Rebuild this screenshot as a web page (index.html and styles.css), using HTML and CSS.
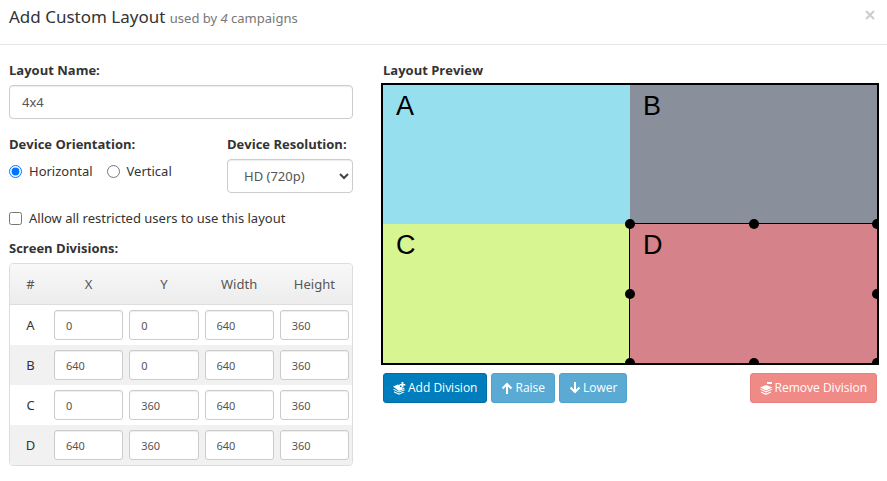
FILE: index.html
```
<!DOCTYPE html>
<html lang="en">
<head>
<meta charset="utf-8">
<title>Add Custom Layout</title>
<link rel="stylesheet" href="styles.css">
</head>
<body>
<header class="modal-header">
  <h1 class="title">Add Custom Layout <small>used by <em>4</em> campaigns</small></h1>
  <button class="close" type="button" aria-label="Close"><svg width="10" height="10" viewBox="0 0 10 10"><path d="M1 1l8 8M9 1l-8 8"/></svg></button>
</header>
<main class="modal-body">
  <form class="settings">
    <label class="heading" for="name">Layout Name:</label>
    <input class="field name" id="name" type="text" value="4x4">
    <div class="device">
      <fieldset class="orientation">
        <legend class="heading">Device Orientation:</legend>
        <div class="radios">
          <label class="choice"><input type="radio" name="orientation" checked>Horizontal</label>
          <label class="choice"><input type="radio" name="orientation">Vertical</label>
        </div>
      </fieldset>
      <div class="resolution">
        <label class="heading" for="resolution">Device Resolution:</label>
        <div class="select-wrap">
          <select class="field" id="resolution"><option>HD (720p)</option></select>
          <svg class="chevron" width="10" height="7" viewBox="0 0 10 7"><path d="M1 1l4 4 4-4"/></svg>
        </div>
      </div>
    </div>
    <label class="choice allow"><input type="checkbox">Allow all restricted users to use this layout</label>
    <h2 class="heading">Screen Divisions:</h2>
    <div class="table-frame">
      <table class="divisions">
        <thead><tr><th class="num">#</th><th>X</th><th>Y</th><th>Width</th><th>Height</th></tr></thead>
        <tbody>
          <tr><td>A</td><td><input aria-label="A X" value="0"></td><td><input aria-label="A Y" value="0"></td><td><input aria-label="A width" value="640"></td><td><input aria-label="A height" value="360"></td></tr>
          <tr><td>B</td><td><input aria-label="B X" value="640"></td><td><input aria-label="B Y" value="0"></td><td><input aria-label="B width" value="640"></td><td><input aria-label="B height" value="360"></td></tr>
          <tr><td>C</td><td><input aria-label="C X" value="0"></td><td><input aria-label="C Y" value="360"></td><td><input aria-label="C width" value="640"></td><td><input aria-label="C height" value="360"></td></tr>
          <tr><td>D</td><td><input aria-label="D X" value="640"></td><td><input aria-label="D Y" value="360"></td><td><input aria-label="D width" value="640"></td><td><input aria-label="D height" value="360"></td></tr>
        </tbody>
      </table>
    </div>
  </form>
  <section class="preview">
    <h2 class="heading preview-heading">Layout Preview</h2>
    <div class="screen">
      <div class="division a">A</div>
      <div class="division b">B</div>
      <div class="division c">C</div>
      <div class="division d selected">D
        <i class="handle top left"></i><i class="handle top center"></i><i class="handle top right"></i>
        <i class="handle middle left"></i><i class="handle middle right"></i>
        <i class="handle bottom left"></i><i class="handle bottom center"></i><i class="handle bottom right"></i>
      </div>
    </div>
    <div class="toolbar">
      <button class="btn primary" type="button"><svg width="13" height="13" viewBox="0 0 13 13"><path d="M0 4.500L5 2.500 7 3.500V5h2v1.500l1.500-.5L12 6.500 6 9zM0 7.500l1-.5L6 9.500l5-2 1.500.6L6 10.600zM1 9.300L6 11.500l4.500-1.800 1 .5L6 12.800 1 10.600zM8.500 0h1.900v1.900h1.900v1.700h-1.900v1.900H8.500V3.600H6.600V1.900h1.900z"/></svg>Add Division</button>
      <button class="btn primary" type="button" disabled><svg width="12" height="12" viewBox="0 0 12 12"><path class="arrow" d="M6 12V2M1.500 6.500L6 2l4.500 4.500"/></svg>Raise</button>
      <button class="btn primary" type="button" disabled><svg width="12" height="12" viewBox="0 0 12 12"><path class="arrow" d="M6 0v10M1.500 5.500L6 10l4.500-4.500"/></svg>Lower</button>
      <button class="btn danger" type="button" disabled><svg width="13" height="13" viewBox="0 0 13 13"><path d="M0 5.500L6 3l6.500 2.500L6 8.500zM0 7.600l1-.5L6 9.300l5.500-2.200 1 .5L6 10.500zM1 9.500l5 2 5-2v1l-5 2.500-5-2.300zM7 0h5v2H7z"/></svg>Remove Division</button>
    </div>
  </section>
</main>
</body>
</html>
```

FILE: styles.css
```
* { box-sizing: border-box; }
body {
  margin: 0;
  background: #fff;
  color: #333;
  font: 13px/20px "Noto Sans", "Open Sans", sans-serif;
}
button, input, select { font: inherit; color: #555; }
.modal-header {
  display: flex;
  justify-content: space-between;
  align-items: flex-start;
  height: 45px;
  padding: 4px 12px 0 9px;
  border-bottom: 1px solid #e5e5e5;
}
.title { margin: 0; font-size: 17px; line-height: 26px; font-weight: 400; }
.title small { font-size: 13px; color: #777; }
.close { padding: 6px 0; border: 0; background: none; line-height: 0; }
.close path { stroke: #ccc; stroke-width: 2; }
.modal-body {
  display: grid;
  grid-template-columns: 344fr 498fr;
  gap: 28px;
  padding: 15px 8px 15px 9px;
}
.heading {
  display: block;
  margin: 0;
  padding: 0;
  font: 700 13px/20px "Open Sans", "Noto Sans", sans-serif;
}
.field {
  display: block;
  width: 100%;
  height: 34px;
  padding: 0 12px;
  border: 1px solid #ccc;
  border-radius: 4px;
  background: #fff;
  box-shadow: inset 0 1px 1px rgba(0, 0, 0, .075);
}
.name { margin-top: 5px; }
.device { display: flex; justify-content: space-between; margin-top: 15px; }
.orientation { margin: 0; padding: 0; border: 0; }
.radios { display: flex; gap: 14px; margin-top: 7px; }
.choice { display: flex; align-items: center; gap: 7px; }
.choice input { width: 13px; height: 13px; margin: 0; }
.resolution { width: 126px; }
.select-wrap { position: relative; margin-top: 5px; }
.select-wrap select { appearance: none; padding: 0 16px; }
.chevron { position: absolute; right: 4px; top: 14px; pointer-events: none; }
.chevron path { fill: none; stroke: #444; stroke-width: 2; }
.allow { margin: 15px 0 10px; }
.table-frame {
  margin-top: 5px;
  border: 1px solid #ddd;
  border-radius: 4px;
  overflow: hidden;
}
.divisions { width: 100%; border-collapse: separate; border-spacing: 0; table-layout: fixed; text-align: center; }
.divisions th {
  height: 41px;
  padding: 0;
  font-weight: 400;
  color: #555;
  border-bottom: 1px solid #ddd;
}
.divisions thead { background: linear-gradient(#f8f8f8, #ececec); }
.num { width: 41px; }
.divisions td { height: 40px; padding: 0 3px; }
.divisions tbody tr:nth-child(even) { background: #f1f1f1; }
.divisions input {
  display: block;
  width: 100%;
  height: 30px;
  padding: 0 11px;
  border: 1px solid #ccc;
  border-radius: 3px;
  background: #fff;
  box-shadow: inset 0 1px 1px rgba(0, 0, 0, .075);
  font-size: 11px;
}
.preview-heading { padding-left: 2px; }
.screen {
  display: grid;
  grid-template: 1fr 1fr / 1fr 1fr;
  aspect-ratio: 498 / 282;
  margin-top: 3px;
  border: 2px solid #000;
  overflow: hidden;
}
.division { padding: 6px 13px; font: 27px/30px "Liberation Sans", sans-serif; color: #000; }
.a { background: #96dfee; }
.b { background: #898f9b; }
.c { background: #d7f591; }
.d { background: #d5828a; }
.selected { position: relative; box-shadow: 0 0 0 1px #000; }
.handle { position: absolute; width: 10px; height: 10px; border-radius: 50%; background: #000; }
.top { top: -5px; }
.middle { top: calc(50% - 5px); }
.bottom { bottom: -5px; }
.left { left: -5px; }
.center { left: calc(50% - 5px); }
.right { right: -5px; }
.toolbar { display: flex; gap: 4px; margin-top: 8px; padding: 0 2px; }
.btn {
  display: flex;
  align-items: center;
  gap: 2px;
  height: 30px;
  padding: 0 9px;
  border: 1px solid;
  border-radius: 3px;
  color: #fff;
  font: 12px/20px "Open Sans", "Noto Sans", sans-serif;
}
.btn svg { fill: #fff; }
.btn .arrow { fill: none; stroke: #fff; stroke-width: 2; }
.primary { background: #007dbc; border-color: #006ba3; }
.primary:disabled { background: #5aaad4; border-color: #4fa2ce; }
.danger { margin-left: auto; background: #f08a86; border-color: #e9827e; }
```
